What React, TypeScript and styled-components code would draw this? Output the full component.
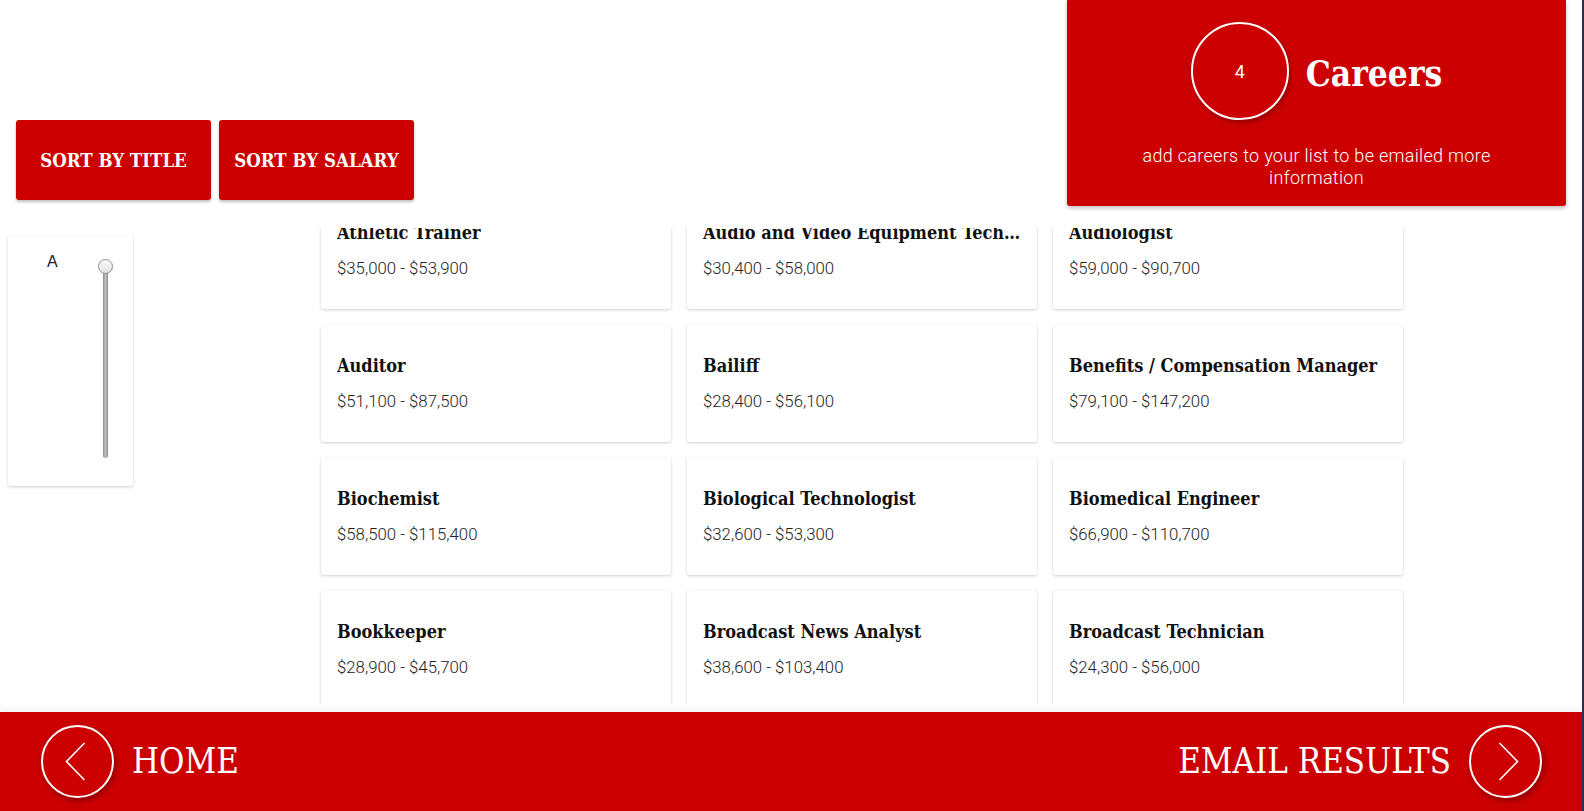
import React, { useLayoutEffect, useRef } from "react";
import styled, { createGlobalStyle } from "styled-components";

const RED = "#cc0000";
const SLAB = `"DejaVu Serif Condensed", "DejaVu Serif", serif`;
const SANS = `Roboto, "Liberation Sans", sans-serif`;

const Global = createGlobalStyle`
  html, body { margin: 0; padding: 0; background: #fff; }
  body { font-family: ${SANS}; }
  * { box-sizing: border-box; }
`;

const Page = styled.div`
  width: 100vw;
  height: 100vh;
  display: flex;
  flex-direction: column;
  overflow: hidden;
  background: #fff;
  border-right: 2px solid #27304d;
`;

const Header = styled.header`
  display: flex;
  justify-content: space-between;
  align-items: flex-start;
  height: 228px;
  flex-shrink: 0;
`;

const SortBar = styled.div`
  display: flex;
  gap: 8px;
  padding: 120px 0 0 16px;
`;

const SortButton = styled.button`
  width: 195px;
  height: 80px;
  padding: 0;
  border: none;
  border-radius: 3px;
  background: ${RED};
  color: #fff;
  font-family: ${SLAB};
  font-weight: bold;
  font-size: 18.5px;
  box-shadow: 0 2px 3px rgba(0, 0, 0, 0.25);
  cursor: pointer;
`;

const CareersPanel = styled.section`
  width: 499px;
  height: 206px;
  margin-right: 16px;
  padding-top: 22px;
  background: ${RED};
  border-radius: 0 0 3px 3px;
  box-shadow: 0 2px 4px rgba(0, 0, 0, 0.25);
  color: #fff;
  display: flex;
  flex-direction: column;
  align-items: center;
`;

const CountRow = styled.div`
  display: flex;
  align-items: center;
  gap: 17px;
`;

const CountCircle = styled.div`
  width: 98px;
  height: 98px;
  border-radius: 50%;
  border: 2px solid #fff;
  display: flex;
  align-items: center;
  justify-content: center;
  font-family: ${SANS};
  font-size: 18px;
  box-shadow: 2px 3px 5px rgba(0, 0, 0, 0.25);
`;

const CareersTitle = styled.h1`
  margin: 5px 0 0;
  font-family: ${SLAB};
  font-weight: bold;
  font-size: 35px;
  line-height: 1;
`;

const CareersNote = styled.p`
  margin: 25px 0 0;
  max-width: 400px;
  text-align: center;
  font-size: 18px;
  line-height: 22px;
  font-weight: 300;
  letter-spacing: 0.3px;
`;

const Main = styled.main`
  flex: 1;
  min-height: 0;
  display: flex;
  padding-bottom: 8px;
`;

const Sidebar = styled.aside`
  width: 317px;
  flex-shrink: 0;
  padding: 8px 0 0 8px;
`;

const LetterPanel = styled.div`
  width: 125px;
  height: 250px;
  background: #fff;
  border-radius: 2px;
  box-shadow: 0 1px 3px rgba(0, 0, 0, 0.2);
  display: grid;
  grid-template-columns: 51px 15px;
  align-items: start;
  padding: 17px 0 0 39px;
`;

const Letter = styled.span`
  font-family: "Liberation Sans", sans-serif;
  font-size: 16px;
  line-height: 18px;
  color: #222;
`;

const SliderTrack = styled.div`
  position: relative;
  width: 15px;
  height: 192px;
  margin-top: 13px;
  &::before {
    content: "";
    position: absolute;
    left: 5px;
    top: 0;
    bottom: 0;
    width: 5px;
    border-radius: 3px;
    background: linear-gradient(90deg, #8a8a8a, #c4c4c4 50%, #8a8a8a);
  }
`;

const SliderThumb = styled.span`
  position: absolute;
  left: 0;
  top: -7px;
  width: 15px;
  height: 15px;
  border-radius: 50%;
  background: linear-gradient(#fafafa, #e2e2e2);
  border: 1px solid #8f8f8f;
`;

const Results = styled.div`
  width: 1090px;
  height: 100%;
  padding: 0 4px;
  overflow-y: auto;
  scrollbar-width: none;
  &::-webkit-scrollbar {
    display: none;
  }
`;

const Grid = styled.div`
  display: grid;
  grid-template-columns: repeat(3, 350px);
  grid-auto-rows: 117px;
  gap: 16px;
  padding-bottom: 16px;
`;

const Card = styled.article`
  background: #fff;
  border-radius: 2px;
  box-shadow: 0 1px 3px rgba(0, 0, 0, 0.18), 0 0 1px rgba(0, 0, 0, 0.1);
  padding: 29px 16px 0;
  min-width: 0;
`;

const CardTitle = styled.h2`
  margin: 0;
  font-family: ${SLAB};
  font-weight: bold;
  font-size: 18px;
  line-height: 24px;
  color: #111;
  white-space: nowrap;
  overflow: hidden;
  text-overflow: ellipsis;
`;

const Salary = styled.p`
  margin: 13px 0 0;
  font-size: 16.8px;
  line-height: 20px;
  font-weight: 300;
  color: #222;
`;

const Footer = styled.footer`
  height: 99px;
  flex-shrink: 0;
  background: ${RED};
  display: flex;
  align-items: center;
  justify-content: space-between;
  padding: 0 40px 0 41px;
  box-shadow: 0 -3px 8px rgba(0, 0, 0, 0.06);
`;

const NavLink = styled.a`
  display: flex;
  align-items: center;
  gap: 18px;
  color: #fff;
  text-decoration: none;
  font-family: ${SLAB};
  font-size: 34.5px;
  line-height: 1;
`;

const NavCircle = styled.span<{ $dir: "left" | "right" }>`
  width: 73px;
  height: 73px;
  border-radius: 50%;
  border: 2px solid #fff;
  display: flex;
  align-items: center;
  justify-content: center;
  box-shadow: 2px 3px 6px rgba(0, 0, 0, 0.3);
  & svg {
    margin-left: ${(p) => (p.$dir === "right" ? "5px" : "0")};
    margin-right: ${(p) => (p.$dir === "left" ? "5px" : "0")};
  }
`;

const Chevron = ({ dir }: { dir: "left" | "right" }) => (
  <svg width="21" height="39" viewBox="0 0 21 39" fill="none">
    <polyline
      points={dir === "left" ? "19.5,1 1.5,19.5 19.5,38" : "1.5,1 19.5,19.5 1.5,38"}
      stroke="#fff"
      strokeWidth="1.6"
    />
  </svg>
);

const careers = [
  ["Athletic Trainer", "$35,000 - $53,900"],
  ["Audio and Video Equipment Technician", "$30,400 - $58,000"],
  ["Audiologist", "$59,000 - $90,700"],
  ["Auditor", "$51,100 - $87,500"],
  ["Bailiff", "$28,400 - $56,100"],
  ["Benefits / Compensation Manager", "$79,100 - $147,200"],
  ["Biochemist", "$58,500 - $115,400"],
  ["Biological Technologist", "$32,600 - $53,300"],
  ["Biomedical Engineer", "$66,900 - $110,700"],
  ["Bookkeeper", "$28,900 - $45,700"],
  ["Broadcast News Analyst", "$38,600 - $103,400"],
  ["Broadcast Technician", "$24,300 - $56,000"],
];

export default function App() {
  const scroller = useRef<HTMLDivElement>(null);
  useLayoutEffect(() => {
    if (scroller.current) scroller.current.scrollTop = 36;
  }, []);

  return (
    <Page>
      <Global />
      <Header>
        <SortBar>
          <SortButton>SORT BY TITLE</SortButton>
          <SortButton>SORT BY SALARY</SortButton>
        </SortBar>
        <CareersPanel>
          <CountRow>
            <CountCircle>4</CountCircle>
            <CareersTitle>Careers</CareersTitle>
          </CountRow>
          <CareersNote>add careers to your list to be emailed more information</CareersNote>
        </CareersPanel>
      </Header>
      <Main>
        <Sidebar>
          <LetterPanel>
            <Letter>A</Letter>
            <SliderTrack>
              <SliderThumb />
            </SliderTrack>
          </LetterPanel>
        </Sidebar>
        <Results ref={scroller}>
          <Grid>
            {careers.map(([title, salary]) => (
              <Card key={title}>
                <CardTitle>{title}</CardTitle>
                <Salary>{salary}</Salary>
              </Card>
            ))}
          </Grid>
        </Results>
      </Main>
      <Footer>
        <NavLink href="#">
          <NavCircle $dir="left">
            <Chevron dir="left" />
          </NavCircle>
          HOME
        </NavLink>
        <NavLink href="#">
          EMAIL RESULTS
          <NavCircle $dir="right">
            <Chevron dir="right" />
          </NavCircle>
        </NavLink>
      </Footer>
    </Page>
  );
}
